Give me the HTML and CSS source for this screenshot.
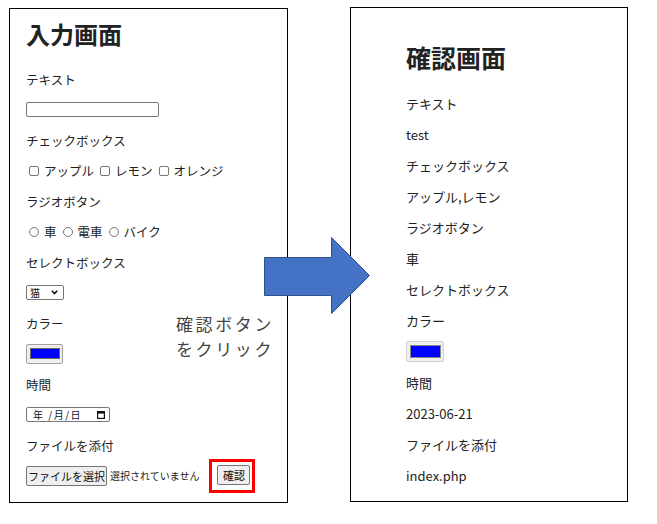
FILE: index.html
```html
<!DOCTYPE html>
<html lang="ja">
  <head>
    <meta charset="UTF-8" />
    <meta name="viewport" content="width=device-width, initial-scale=1.0" />
    <title>入力画面と確認画面</title>
    <link rel="stylesheet" href="styles.css">
  </head>
  <body>
    <div class="canvas">
      <section class="shot input-shot">
        <h1>入力画面</h1>
        <div class="row">テキスト</div>
        <div class="row"><input type="text" class="text-box"></div>
        <div class="row">チェックボックス</div>
        <div class="row">
          <label class="opt"><input type="checkbox" class="tick">アップル</label>
          <label class="opt"><input type="checkbox" class="tick">レモン</label>
          <label class="opt"><input type="checkbox" class="tick">オレンジ</label>
        </div>
        <div class="row">ラジオボタン</div>
        <div class="row">
          <label class="opt"><input type="radio" name="ride" class="tick round">車</label>
          <label class="opt"><input type="radio" name="ride" class="tick round">電車</label>
          <label class="opt"><input type="radio" name="ride" class="tick round">バイク</label>
        </div>
        <div class="row">セレクトボックス</div>
        <div class="row">
          <span class="select-box">猫
            <svg class="chevron" width="7" height="5" viewBox="0 0 7 5"><path d="M0.8 0.8 L3.5 3.6 L6.2 0.8" fill="none" stroke="#111" stroke-width="1.6"/></svg>
          </span>
        </div>
        <div class="row">カラー</div>
        <div class="row"><span class="color-btn"><span class="swatch"></span></span></div>
        <div class="row">時間</div>
        <div class="row">
          <span class="date-box"><span class="date-text">年 /月/日</span>
            <svg class="cal" width="8" height="8" viewBox="0 0 8 8"><rect x="0.6" y="0.6" width="6.8" height="6.8" fill="none" stroke="#111" stroke-width="1.2"/><rect x="0.6" y="0.6" width="6.8" height="2" fill="#111"/></svg>
          </span>
        </div>
        <div class="row">ファイルを添付</div>
        <div class="row">
          <span class="btn file-btn">ファイルを選択</span>
          <span class="no-file">選択されていません</span>
          <span class="highlight"><button class="btn">確認</button></span>
        </div>
      </section>

      <section class="shot confirm-shot">
        <h1>確認画面</h1>
        <div class="row">テキスト</div>
        <div class="row">test</div>
        <div class="row">チェックボックス</div>
        <div class="row">アップル,レモン</div>
        <div class="row">ラジオボタン</div>
        <div class="row">車</div>
        <div class="row">セレクトボックス</div>
        <div class="row">カラー</div>
        <div class="row"><span class="color-btn off"><span class="swatch"></span></span></div>
        <div class="row">時間</div>
        <div class="row">2023-06-21</div>
        <div class="row">ファイルを添付</div>
        <div class="row">index.php</div>
      </section>

      <svg class="arrow" width="108" height="78" viewBox="0 0 108 78">
        <polygon points="0.5,20.5 67.5,20.5 67.5,0.5 105.5,38.5 67.5,76.5 67.5,58.5 0.5,58.5" fill="#4472c4" stroke="#2f528f" stroke-width="1"/>
      </svg>
      <p class="caption">確認ボタン<br>をクリック</p>
    </div>
  </body>
</html>
```

FILE: styles.css
```css
html{
    box-sizing: border-box;
}
*, *::before, *::after{
    box-sizing: inherit;
}

body{
    margin: 0;
    background: #fff;
    color: #222;
    font-family: "Noto Sans CJK JP", "Noto Sans", sans-serif;
}

.canvas{
    position: relative;
    width: 657px;
    height: 524px;
    display: flex;
    align-items: flex-start;
    gap: 62px;
    padding: 7px 0 0 9px;
}

/* the two screenshots */
.shot{
    border: 1px solid #000;
    height: 495px;
    display: flex;
    flex-direction: column;
}
.shot h1{
    margin: 0;
    line-height: 30px;
    font-weight: bold;
}
.row{
    display: flex;
    align-items: center;
    white-space: nowrap;
}

.input-shot{
    width: 279px;
    margin-top: 1px;
    padding: 10px 0 0 16px;
    font-size: 12.5px;
}
.input-shot h1{
    font-size: 24px;
    margin-bottom: 14.75px;
}
.input-shot .row{
    height: 30.5px;
}

.confirm-shot{
    width: 278px;
    padding: 34px 0 0 55px;
    font-size: 13px;
}
.confirm-shot h1{
    font-size: 25px;
    margin-bottom: 15.5px;
}
.confirm-shot .row{
    height: 31px;
}

/* form parts */
.text-box{
    appearance: none;
    width: 133px;
    height: 15px;
    margin: 0;
    border: 1px solid #767676;
    border-radius: 2px;
    background: #fff;
}

.opt{
    display: inline-flex;
    align-items: center;
    margin-right: 3px;
}
.tick{
    appearance: none;
    width: 10px;
    height: 10px;
    margin: 0 5px 0 3px;
    border: 1px solid #767676;
    border-radius: 2px;
    background: #fff;
}
.tick.round{
    border-radius: 50%;
}

.select-box{
    display: inline-flex;
    align-items: center;
    justify-content: space-between;
    width: 38px;
    height: 15px;
    padding: 0 5px 0 3px;
    border: 1px solid #767676;
    border-radius: 2px;
    font-size: 10px;
    color: #111;
}

.color-btn{
    display: inline-flex;
    align-items: center;
    justify-content: center;
    width: 37px;
    height: 20px;
    border: 1px solid #a0a0a0;
    border-radius: 2px;
    background: #efefef;
}
.color-btn .swatch{
    width: 30px;
    height: 11px;
    border: 1px solid #666;
    background: #0000ff;
}
.color-btn.off{
    width: 38px;
    height: 21px;
    border-color: #d0d0d0;
}
.color-btn.off .swatch{
    width: 31px;
    height: 13px;
    border-color: #888;
}

.date-box{
    display: inline-flex;
    align-items: center;
    justify-content: space-between;
    width: 84px;
    height: 15px;
    padding: 0 4px 0 6px;
    border: 1px solid #767676;
    border-radius: 2px;
    font-size: 10px;
    letter-spacing: 1.5px;
    color: #111;
}

.btn{
    display: inline-flex;
    align-items: center;
    justify-content: center;
    height: 20px;
    margin: 0;
    padding: 0 4px;
    border: 1px solid #767676;
    border-radius: 2px;
    background: #efefef;
    color: #111;
    font-family: inherit;
    font-size: 11px;
}
.file-btn{
    width: 81px;
}
.no-file{
    margin-left: 3px;
    font-size: 10px;
}
.highlight{
    display: inline-flex;
    margin-left: 10px;
    padding: 3px 2px 5px 5px;
    border: 3px solid #ff0000;
}
.highlight .btn{
    width: 33px;
}

/* annotation */
.arrow{
    position: absolute;
    left: 264px;
    top: 237px;
}
.caption{
    position: absolute;
    left: 176px;
    top: 311px;
    margin: 0;
    font-size: 17px;
    line-height: 25px;
    letter-spacing: 2.6px;
    color: #444;
}
```
